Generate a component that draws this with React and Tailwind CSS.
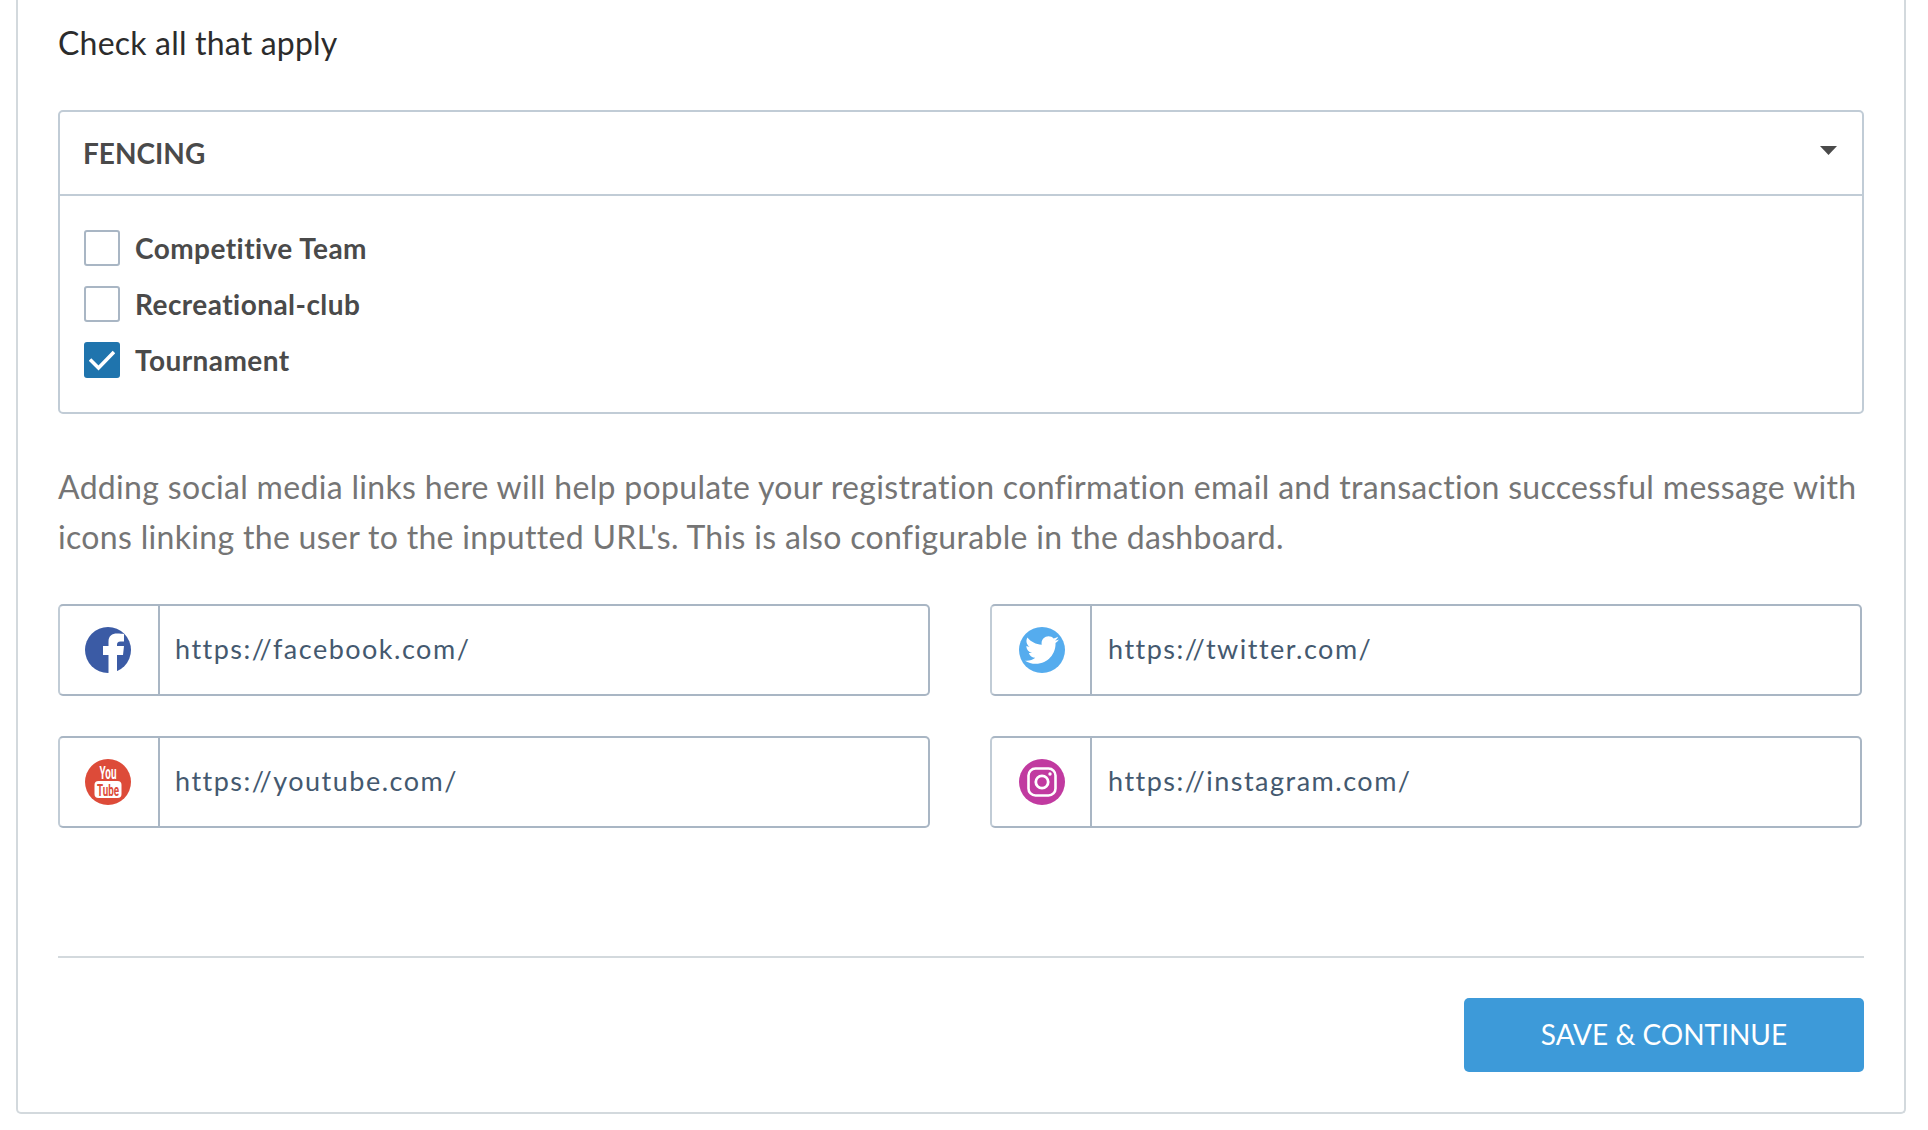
import { FaTwitter } from "react-icons/fa";

const font = { fontFamily: "Lato, sans-serif" };

function FacebookIcon() {
  return (
    <svg width="46" height="46" viewBox="0 0 46 46">
      <circle cx="23" cy="23" r="23" fill="#3b5ba5" />
      <path
        d="M23.5 46 V28 H18 V19 H23.5 V14.5 C23.5 9 27 6.5 32 6.5 C35 6.5 37.5 6.7 39 7 V14.5 H35.5 C32.8 14.5 32 15.8 32 18 V19 H39 L38 28 H32 V46 Z"
        fill="#fff"
      />
    </svg>
  );
}

function TwitterIcon() {
  return (
    <div className="w-[46px] h-[46px] rounded-full bg-[#55acee] flex items-center justify-center">
      <FaTwitter className="w-[34px] h-[34px] text-white" />
    </div>
  );
}

function YoutubeIcon() {
  return (
    <svg width="46" height="46" viewBox="0 0 46 46" className="overflow-visible">
      <circle cx="23" cy="23" r="23" fill="#dd4b39" />
      <text x="23" y="19.5" textAnchor="middle" fontFamily="Liberation Sans Narrow, Roboto, sans-serif" fontWeight="700" fontSize="18" fill="#fff" textLength="17" lengthAdjust="spacingAndGlyphs">You</text>
      <rect x="9.5" y="22" width="27" height="17" rx="4" fill="#fff" />
      <text x="23" y="36.5" textAnchor="middle" fontFamily="Liberation Sans Narrow, Roboto, sans-serif" fontWeight="700" fontSize="16" fill="#dd4b39" textLength="22" lengthAdjust="spacingAndGlyphs">Tube</text>
    </svg>
  );
}

function InstagramIcon() {
  return (
    <svg width="46" height="46" viewBox="0 0 46 46">
      <circle cx="23" cy="23" r="23" fill="#c13aa0" />
      <rect x="9.5" y="9.5" width="27" height="27" rx="7" fill="none" stroke="#fff" strokeWidth="2.6" />
      <circle cx="23" cy="23" r="6.2" fill="none" stroke="#fff" strokeWidth="2.8" />
      <circle cx="31" cy="15" r="1.7" fill="#fff" />
    </svg>
  );
}

function LinkInput({ icon, url, addon, field }) {
  return (
    <div className="flex h-[92px] rounded-[5px] border-2 border-l-[#c1ccd6] border-t-[#a9b6c4] border-b-[#a9b6c4] border-r-[#a9b6c4] bg-white">
      <div className={`w-[100px] shrink-0 flex items-center justify-center border-r-2 border-[#a9b6c4] ${addon}`}>
        {icon}
      </div>
      <div className={`flex-1 flex items-center pb-[2px] text-[27px] tracking-[1.5px] text-[#44596f] ${field}`}>
        {url}
      </div>
    </div>
  );
}

function CheckRow({ label, checked }) {
  return (
    <div className="flex items-center h-[36px] gap-[15px]">
      {checked ? (
        <div className="w-[36px] h-[36px] rounded-[3px] bg-[#1f74ad] flex items-center justify-center">
          <svg width="26" height="22" viewBox="0 0 26 22" fill="none">
            <path d="M1 10.5 L9.5 19 L25 3" stroke="#fff" strokeWidth="3.6" />
          </svg>
        </div>
      ) : (
        <div className="w-[36px] h-[36px] rounded-[3px] border-2 border-[#a9b6c4] bg-white" />
      )}
      <span className="text-[28px] font-bold text-[#4a4a4a] tracking-[0.45px]">{label}</span>
    </div>
  );
}

export default function App() {
  return (
    <div className="h-[1130px] bg-white overflow-hidden" style={font}>
      <div className="ml-4 mr-[22px] h-[1114px] border-2 border-t-0 border-[#d3d9dd] rounded-b-[5px] px-10 flex flex-col">
        <h2 className="mt-[24px] text-[32px] leading-[38px] tracking-[0.2px] text-[#2c2c2c] font-normal">Check all that apply</h2>

        {/* Fencing panel */}
        <div className="mt-[48px] border-2 border-[#c1ccd6] rounded-[5px] h-[304px]">
          <div className="h-[84px] px-[23px] flex items-center justify-between border-b-2 border-[#c1ccd6]">
            <span className="text-[28px] font-bold text-[#4a4a4a]">FENCING</span>
            <svg width="17" height="10" viewBox="0 0 17 10" className="mr-[2px] mb-[4px]">
              <path d="M0 0 H17 L8.5 9 Z" fill="#4a4a4a" />
            </svg>
          </div>
          <div className="pl-[24px] pt-[34px] flex flex-col gap-[20px]">
            <CheckRow label="Competitive Team" />
            <CheckRow label="Recreational-club" />
            <CheckRow label="Tournament" checked />
          </div>
        </div>

        <p className="mt-[48px] text-[32px] leading-[50px] text-[#757575] tracking-[0.32px] whitespace-nowrap">
          Adding social media links here will help populate your registration confirmation email and transaction successful message with
          <br />
          icons linking the user to the inputted URL's. This is also configurable in the dashboard.
        </p>

        <div className="mt-[42px] grid grid-cols-2 gap-x-[60px] gap-y-[40px] mr-[2px]">
          <LinkInput icon={<FacebookIcon />} url="https://facebook.com/" addon="pr-[2px]" field="pl-[15px]" />
          <LinkInput icon={<TwitterIcon />} url="https://twitter.com/" addon="pl-[1px]" field="pl-[16px]" />
          <LinkInput icon={<YoutubeIcon />} url="https://youtube.com/" addon="pr-[2px]" field="pl-[15px]" />
          <LinkInput icon={<InstagramIcon />} url="https://instagram.com/" addon="pl-[1px]" field="pl-[16px]" />
        </div>

        <div className="mt-[128px] border-t-2 border-[#d3d9dd]" />

        <div className="mt-[40px] flex justify-end">
          <button className="w-[400px] h-[74px] rounded-[5px] bg-[#3d9ad9] text-white text-[28px] pb-[2px]">SAVE &amp; CONTINUE</button>
        </div>
      </div>
    </div>
  );
}
